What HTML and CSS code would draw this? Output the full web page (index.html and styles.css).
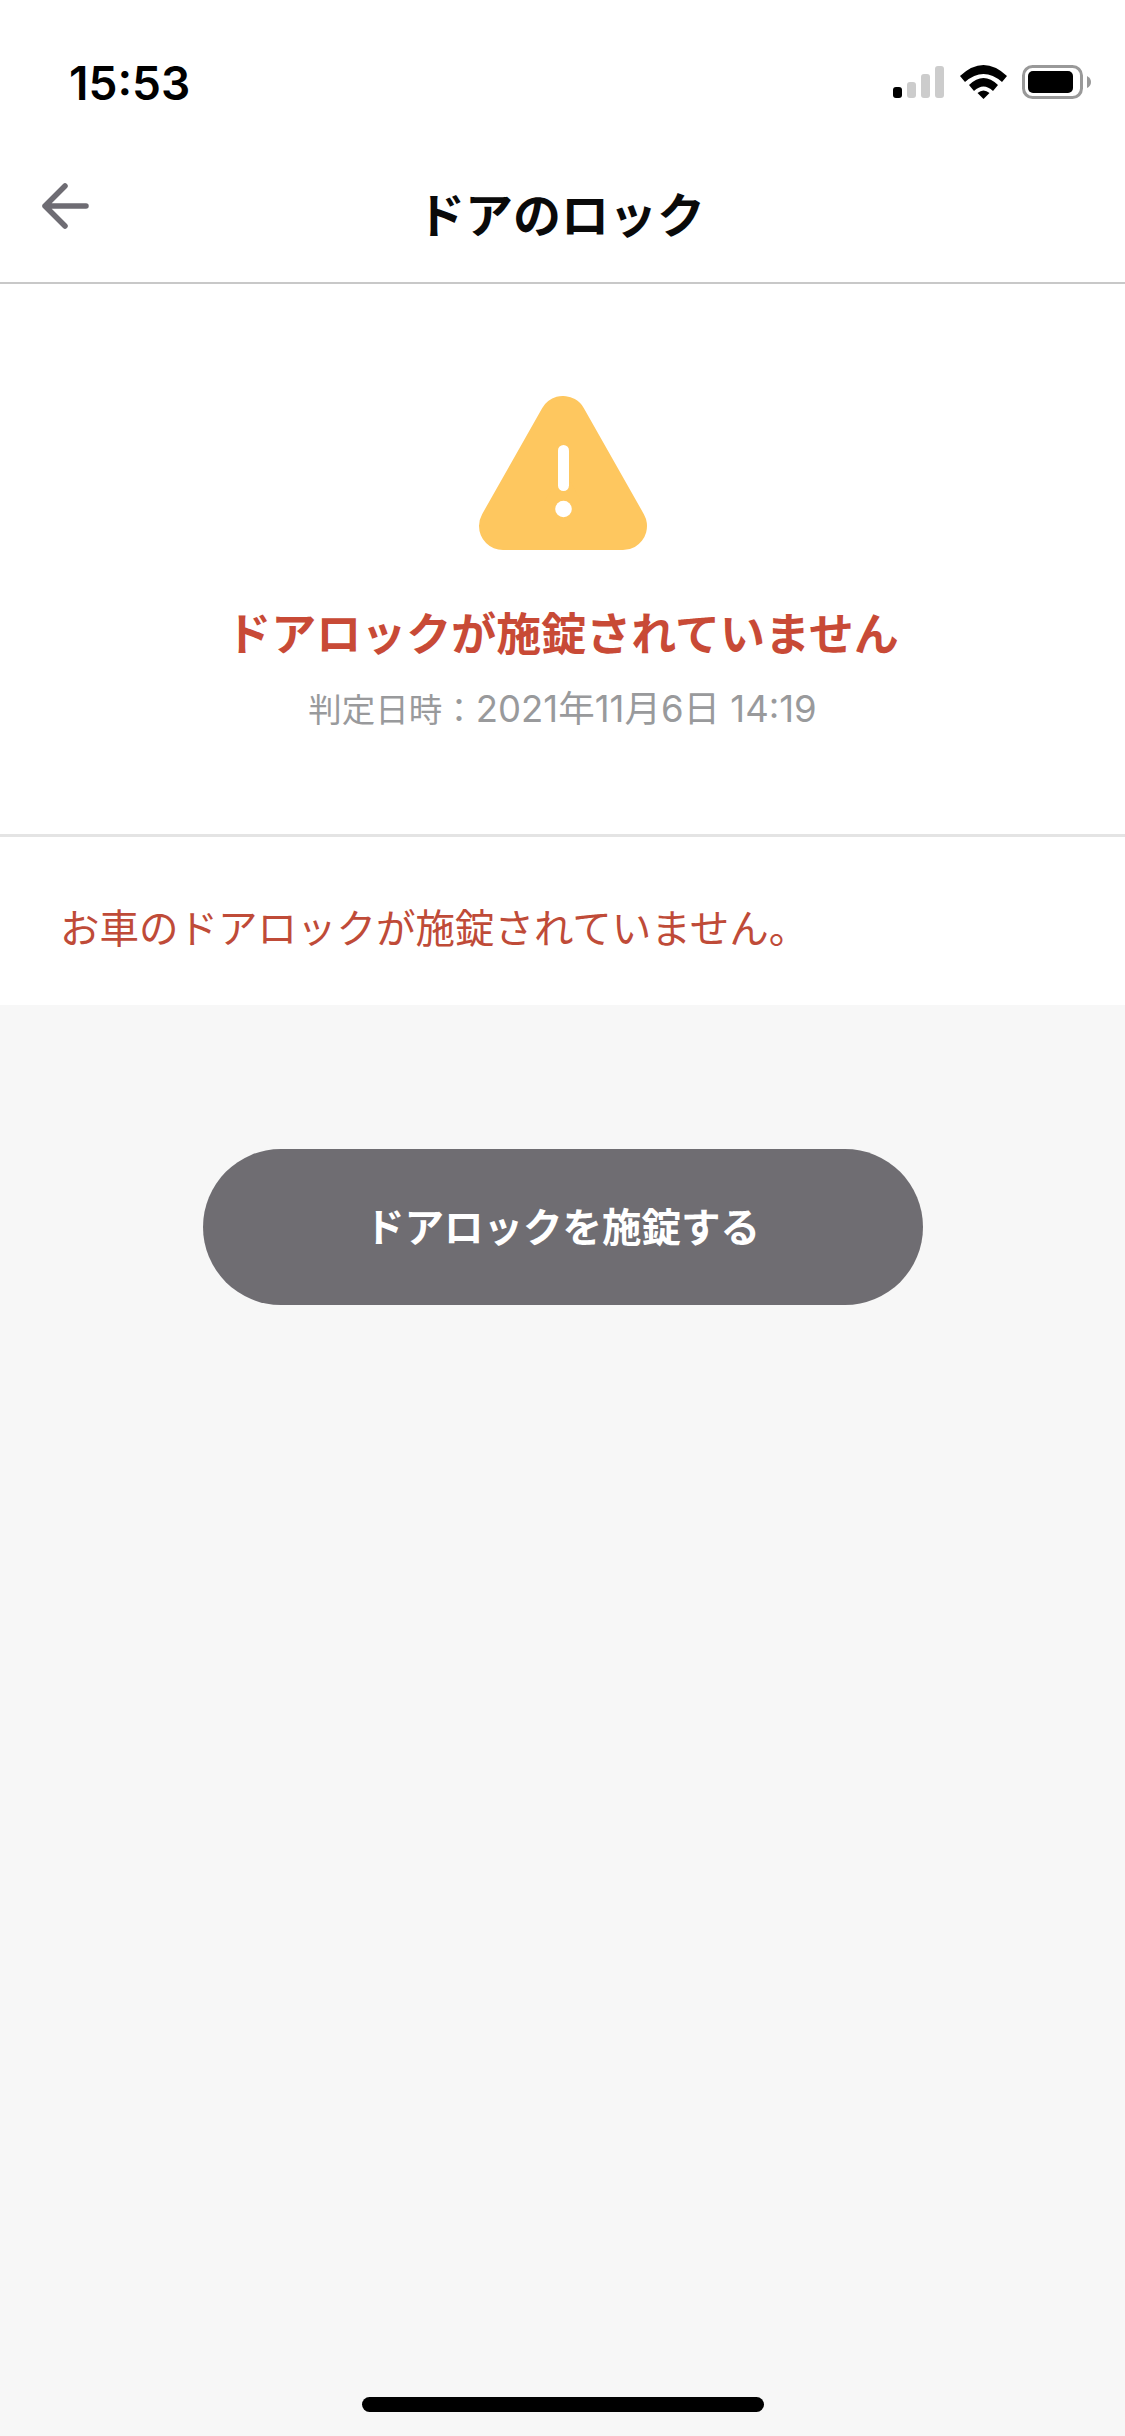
FILE: index.html
```html
<!DOCTYPE html>
<html lang="ja">
<head>
<meta charset="utf-8">
<title>ドアのロック</title>
<link rel="stylesheet" href="styles.css">
</head>
<body>
<div class="page">
  <div class="top">
    <div class="status">
      <span class="time">15:53</span>
      <svg class="status-icons" width="202" height="40" viewBox="0 0 202 40">
        <rect x="2" y="23" width="9" height="11" rx="3" fill="#000"/>
        <rect x="16" y="18" width="9" height="16" rx="3" fill="#ccc"/>
        <rect x="30" y="10" width="9" height="24" rx="3" fill="#ccc"/>
        <rect x="44" y="2" width="9" height="32" rx="3" fill="#ccc"/>
        <path d="M69 12 Q92.500 -10 116 12 L111 18 Q92.500 2 74 18 Z" fill="#000"/>
        <path d="M78 21 Q92.500 7 107 21 L102 27 Q92.500 18 83 27 Z" fill="#000"/>
        <path d="M86.500 29 Q92.500 24 98.500 29 L92.500 35 Z" fill="#000"/>
        <rect x="132.500" y="2.500" width="58" height="31" rx="9" fill="none" stroke="#999" stroke-width="3"/>
        <rect x="137" y="7" width="45" height="22" rx="5" fill="#000"/>
        <path d="M196 12 Q200 14 200 18 Q200 22 196 24 Z" fill="#999"/>
      </svg>
    </div>
    <header class="nav">
      <svg class="back" width="50" height="50" viewBox="0 0 50 50">
        <path d="M24 5 L4 25 L24 45 M4 25 L45 25" fill="none" stroke="#6e6c73" stroke-width="5.500" stroke-linecap="round" stroke-linejoin="round"/>
      </svg>
      <h1 class="nav-title">ドアのロック</h1>
    </header>
  </div>
  <section class="summary">
    <svg class="warn" width="170" height="154" viewBox="0 0 170 154">
      <path d="M85 24 L145 130 L25 130 Z" fill="#fec75f" stroke="#fec75f" stroke-width="48" stroke-linejoin="round"/>
      <rect x="80" y="49" width="11" height="46" rx="5.500" fill="#fff"/>
      <circle cx="85.500" cy="113" r="8.300" fill="#fff"/>
    </svg>
    <h2 class="alert-title">ドアロックが施錠されていません</h2>
    <p class="judged"><span class="judged-label">判定日時：</span><span class="judged-value">2021年11月6日 14:19</span></p>
  </section>
  <section class="message">
    <p class="message-text">お車のドアロックが施錠されていません。</p>
  </section>
  <main class="content">
    <button class="action">ドアロックを施錠する</button>
    <div class="home-indicator"></div>
  </main>
</div>
</body>
</html>
```
FILE: styles.css
```css
* { box-sizing: border-box; margin: 0; padding: 0; }
html, body { width: 1125px; height: 2436px; overflow: hidden; }
body { background: #f7f7f7; font-family: "Inter", "Noto Sans CJK JP", sans-serif; }
.page { display: flex; flex-direction: column; height: 2436px; }
.top { height: 284px; background: #fff; border-bottom: 2px solid #c8c8c8; }
.status { height: 130px; display: flex; justify-content: space-between; align-items: flex-start; padding: 56px 32px 0 69px; }
.time { font-size: 46px; line-height: 54px; font-weight: 600; color: #000; }
.status-icons { margin-top: 8px; }
.nav { position: relative; height: 152px; display: flex; justify-content: center; padding-right: 3px; }
.back { position: absolute; left: 41px; top: 51px; }
.nav-title { font-size: 48px; line-height: 68px; font-weight: 700; color: #0a0a0a; margin-top: 52px; }
.summary { height: 553px; background: #fff; border-bottom: 3px solid #e4e4e4; display: flex; flex-direction: column; align-items: center; padding-top: 112px; }
.alert-title { font-size: 45px; line-height: 64px; font-weight: 700; color: #c84a36; margin-top: 53px; }
.judged { line-height: 50px; color: #999a9c; margin-top: 17px; }
.judged-label { font-size: 33.500px; }
.judged-value { font-size: 36.500px; }
.message { height: 168px; background: #fff; padding: 64px 0 0 60px; }
.message-text { font-size: 39.500px; line-height: 56px; color: #bf4b38; }
.content { flex: 1; display: flex; flex-direction: column; align-items: center; padding-top: 144px; padding-bottom: 24px; }
.action { width: 720px; height: 156px; border: 0; border-radius: 78px; background: #6f6d72; color: #fff; font-family: inherit; font-size: 39.500px; font-weight: 700; padding-bottom: 5px; }
.home-indicator { width: 402px; height: 15px; border-radius: 8px; background: #000; margin-top: auto; }
```
